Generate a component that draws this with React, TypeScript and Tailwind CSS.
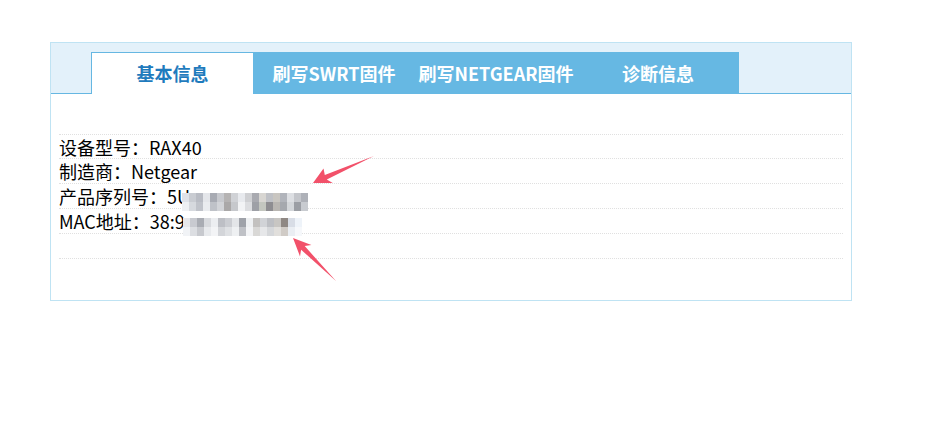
const FONT = { fontFamily: '"Noto Sans CJK SC", "Noto Sans", sans-serif' };

const tabs = ['基本信息', '刷写SWRT固件', '刷写NETGEAR固件', '诊断信息'];

const blur3 = [
  ['#dfe2e8', '#c9ccd2', '#b9bcc4', '#e4e6ea', '#a8abb3', '#c7c9ce', '#b5b3b3', '#d0d2d6', '#e8eaee', '#cfd0d3', '#a9aab0', '#d8d6d2', '#bfc1c6', '#c9c6c1', '#b1b4bb', '#dddfe3', '#c4c6cb', '#aeb1b8'],
  ['#eef0f3', '#d6d9de', '#c0c3ca', '#eaecef', '#bfc2c8', '#d2d4d8', '#aaa8a8', '#c6c8cc', '#f2f3f5', '#dcdde0', '#9ea0a6', '#c3c6bf', '#8e8d91', '#b9b6b2', '#a5a8ae', '#d3d6da', '#9b9ea4', '#c8cbd0'],
];
const blur4 = [
  ['#e6e8ec', '#c8cad0', '#a9acb3', '#d8dade', '#eceef1', '#bdbfc5', '#cbcdd2', '#e3e5e8', '#9fa2a9', '#eef0f2', '#c3c1bf', '#d1d3d7', '#bdbfc4', '#c8c6c3', '#8f8884', '#d8dde6', '#eef3f9'],
  ['#f1f3f6', '#dcdee2', '#c7c9ce', '#e8eaed', '#f3f4f6', '#d3d5d9', '#dfe1e4', '#eef0f2', '#bfc1c6', '#f3f4f6', '#d9d8d6', '#e6e7e9', '#d5d7da', '#e1dfdc', '#d0cbc6', '#eaeef3', '#f6f8fb'],
];

function Mosaic({ rows }: { rows: string[][] }) {
  return (
    <span className="inline-flex flex-col align-middle">
      {rows.map((r, i) => (
        <span key={i} className="flex">
          {r.map((c, j) => (
            <span key={j} className="block w-[7px] h-[9px]" style={{ background: c }} />
          ))}
        </span>
      ))}
    </span>
  );
}

function Row({ children, first }: { children?: React.ReactNode; first?: boolean }) {
  return (
    <div
      className={
        'h-[25px] leading-[24px] border-b border-dotted border-[#e0e0e0] flex items-center ' +
        (first ? 'border-t' : '')
      }
    >
      {children}
    </div>
  );
}

function Arrow({ points }: { points: string }) {
  return <polygon points={points} fill="#f2516a" />;
}

export default function App() {
  return (
    <div className="relative w-[934px] h-[424px] bg-white overflow-hidden" style={FONT}>
      <div className="ml-[50px] mt-[42px] w-[802px] h-[259px] border border-[#bfe3f3]">
        <div className="h-[51px] bg-[#e3f1fa] border-b border-[#66b7e2] pl-[40px] flex items-end">
          {tabs.map((t, i) => (
            <div
              key={t}
              className={
                'w-[162px] h-[42px] -mb-px flex items-center justify-center text-[18px] font-bold ' +
                (i === 0
                  ? 'bg-white text-[#1f7bbd] border-t border-l border-[#66b7e2]'
                  : 'bg-[#66b8e3] text-white')
              }
            >
              {t}
            </div>
          ))}
        </div>
        <div className="px-[8px] pt-[40px] text-[18px] text-black">
          <Row first>设备型号：RAX40</Row>
          <Row>制造商：Netgear</Row>
          <Row>
            产品序列号：5U
            <span className="-ml-[8px] mt-[5px]">
              <Mosaic rows={blur3} />
            </span>
          </Row>
          <Row>
            MAC地址：38:9
            <span className="-ml-[2px] mt-[5px]">
              <Mosaic rows={blur4} />
            </span>
          </Row>
          <Row />
        </div>
      </div>
      <svg className="absolute left-0 top-0" width="934" height="424">
        <Arrow points="313,183 332.7,183 326.8,179.6 374,156 324.8,175 323.5,168.4" />
        <Arrow points="293,238 311.4,245 304.7,246.1 336,281 301.1,249.7 300,256.4" />
      </svg>
    </div>
  );
}
